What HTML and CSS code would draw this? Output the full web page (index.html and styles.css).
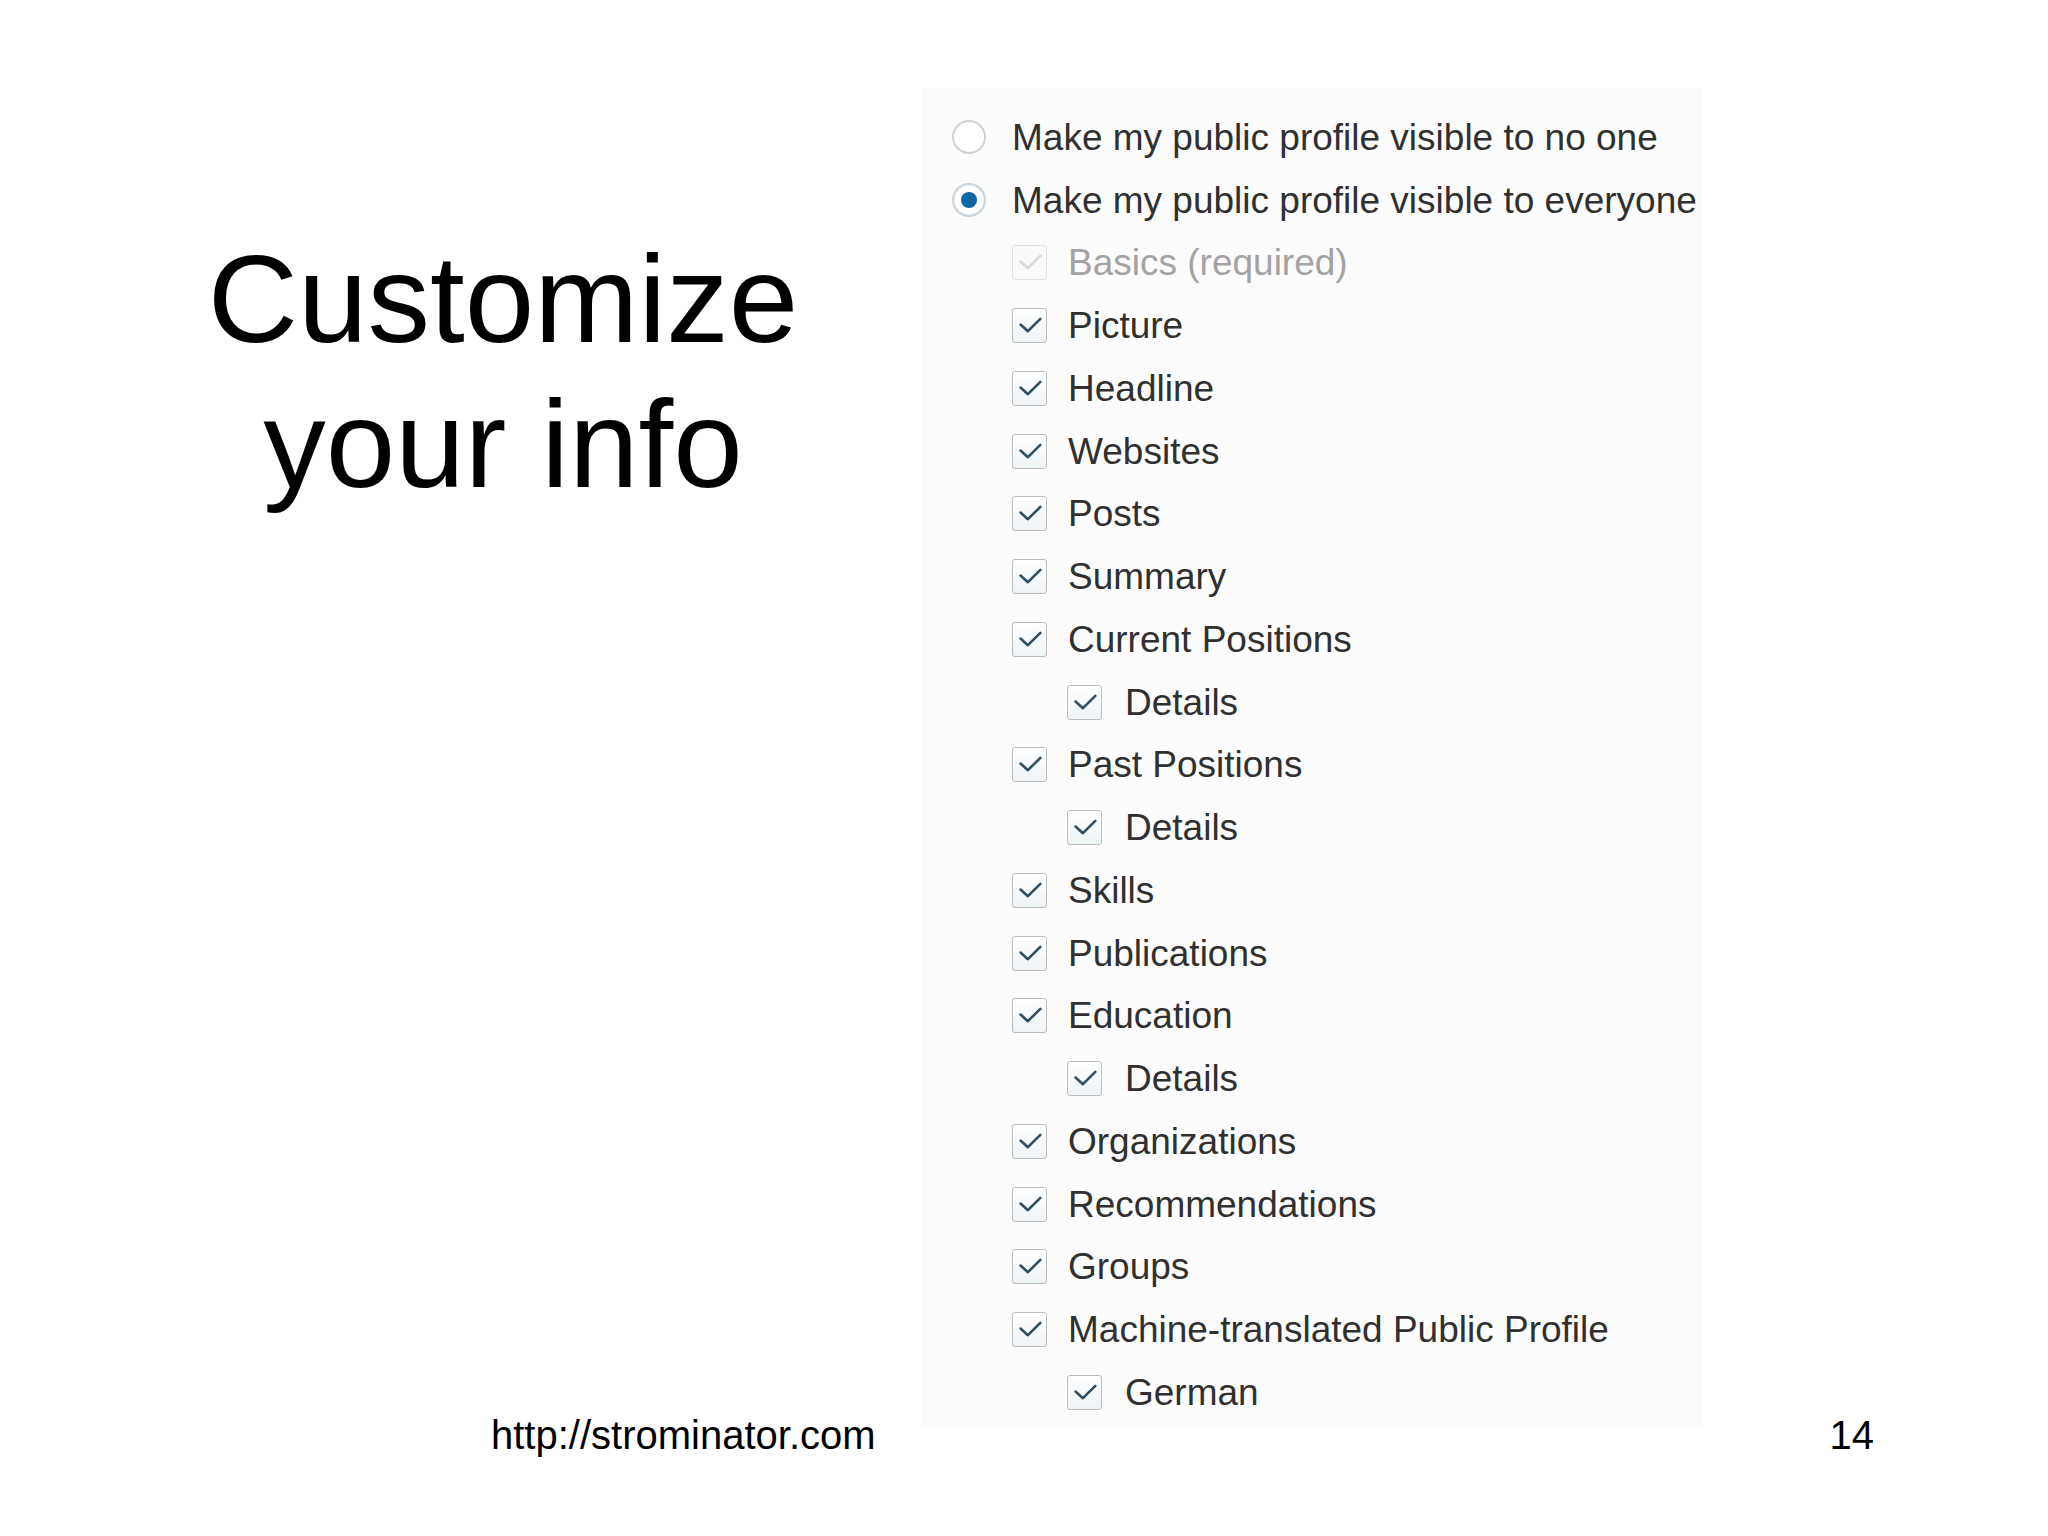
FILE: index.html
```html
<!DOCTYPE html>
<html lang="en">
<head>
<meta charset="utf-8">
<title>Customize your info</title>
<link rel="stylesheet" href="styles.css">
</head>
<body>
<main class="slide">
  <h1 class="slide-title">Customize<br>your info</h1>

  <section class="panel">
    <ul class="options">
      <li class="opt"><span class="radio"></span><span class="label">Make my public profile visible to no one</span></li>
      <li class="opt"><span class="radio radio--on"></span><span class="label">Make my public profile visible to everyone</span></li>
      <li class="opt opt--l1 opt--disabled"><span class="check"><svg viewBox="0 0 35 35"><path d="M8 16.5 L15.8 23.5 L29 10.5"/></svg></span><span class="label">Basics (required)</span></li>
      <li class="opt opt--l1"><span class="check"><svg viewBox="0 0 35 35"><path d="M8 16.5 L15.8 23.5 L29 10.5"/></svg></span><span class="label">Picture</span></li>
      <li class="opt opt--l1"><span class="check"><svg viewBox="0 0 35 35"><path d="M8 16.5 L15.8 23.5 L29 10.5"/></svg></span><span class="label">Headline</span></li>
      <li class="opt opt--l1"><span class="check"><svg viewBox="0 0 35 35"><path d="M8 16.5 L15.8 23.5 L29 10.5"/></svg></span><span class="label">Websites</span></li>
      <li class="opt opt--l1"><span class="check"><svg viewBox="0 0 35 35"><path d="M8 16.5 L15.8 23.5 L29 10.5"/></svg></span><span class="label">Posts</span></li>
      <li class="opt opt--l1"><span class="check"><svg viewBox="0 0 35 35"><path d="M8 16.5 L15.8 23.5 L29 10.5"/></svg></span><span class="label">Summary</span></li>
      <li class="opt opt--l1"><span class="check"><svg viewBox="0 0 35 35"><path d="M8 16.5 L15.8 23.5 L29 10.5"/></svg></span><span class="label">Current Positions</span></li>
      <li class="opt opt--l2"><span class="check"><svg viewBox="0 0 35 35"><path d="M8 16.5 L15.8 23.5 L29 10.5"/></svg></span><span class="label">Details</span></li>
      <li class="opt opt--l1"><span class="check"><svg viewBox="0 0 35 35"><path d="M8 16.5 L15.8 23.5 L29 10.5"/></svg></span><span class="label">Past Positions</span></li>
      <li class="opt opt--l2"><span class="check"><svg viewBox="0 0 35 35"><path d="M8 16.5 L15.8 23.5 L29 10.5"/></svg></span><span class="label">Details</span></li>
      <li class="opt opt--l1"><span class="check"><svg viewBox="0 0 35 35"><path d="M8 16.5 L15.8 23.5 L29 10.5"/></svg></span><span class="label">Skills</span></li>
      <li class="opt opt--l1"><span class="check"><svg viewBox="0 0 35 35"><path d="M8 16.5 L15.8 23.5 L29 10.5"/></svg></span><span class="label">Publications</span></li>
      <li class="opt opt--l1"><span class="check"><svg viewBox="0 0 35 35"><path d="M8 16.5 L15.8 23.5 L29 10.5"/></svg></span><span class="label">Education</span></li>
      <li class="opt opt--l2"><span class="check"><svg viewBox="0 0 35 35"><path d="M8 16.5 L15.8 23.5 L29 10.5"/></svg></span><span class="label">Details</span></li>
      <li class="opt opt--l1"><span class="check"><svg viewBox="0 0 35 35"><path d="M8 16.5 L15.8 23.5 L29 10.5"/></svg></span><span class="label">Organizations</span></li>
      <li class="opt opt--l1"><span class="check"><svg viewBox="0 0 35 35"><path d="M8 16.5 L15.8 23.5 L29 10.5"/></svg></span><span class="label">Recommendations</span></li>
      <li class="opt opt--l1"><span class="check"><svg viewBox="0 0 35 35"><path d="M8 16.5 L15.8 23.5 L29 10.5"/></svg></span><span class="label">Groups</span></li>
      <li class="opt opt--l1"><span class="check"><svg viewBox="0 0 35 35"><path d="M8 16.5 L15.8 23.5 L29 10.5"/></svg></span><span class="label">Machine-translated Public Profile</span></li>
      <li class="opt opt--l2"><span class="check"><svg viewBox="0 0 35 35"><path d="M8 16.5 L15.8 23.5 L29 10.5"/></svg></span><span class="label">German</span></li>
    </ul>
  </section>

  <footer class="slide-url">http://strominator.com</footer>
  <div class="slide-num">14</div>
</main>
</body>
</html>
```

FILE: styles.css
```css
html, body {
  margin: 0;
  padding: 0;
  background: #ffffff;
}

body {
  font-family: "Liberation Sans", Arial, sans-serif;
  color: #000;
}

/* slide canvas: left column holds the title, right column the settings panel */
.slide {
  width: 2048px;
  height: 1536px;
  display: grid;
  grid-template-columns: 922px 1fr;
  grid-template-rows: 88px 1339px 1fr;
}

.slide-title {
  grid-column: 1;
  grid-row: 2;
  align-self: start;
  margin: 138px 0 0 0;
  padding-left: 84px;
  font-size: 125px;
  font-weight: 400;
  line-height: 145px;
  text-align: center;
  color: #000;
}

/* settings panel */
.panel {
  grid-column: 2;
  grid-row: 2;
  width: 780px;
  background: #fcfcfc;
  padding: 18px 0 0 30px;
  box-sizing: border-box;
}

.options {
  list-style: none;
  margin: 0;
  padding: 0;
}

.opt {
  height: 62.75px;
  display: flex;
  align-items: center;
  font-size: 37px;
  color: #303030;
}

.opt--l1 { padding-left: 60px; }
.opt--l2 { padding-left: 115px; }

.label {
  line-height: 1;
  white-space: nowrap;
}

/* radio buttons */
.radio {
  width: 30px;
  height: 30px;
  border: 2px solid #d2d2d2;
  border-radius: 50%;
  background: #ffffff;
  margin-right: 26px;
  flex: none;
  display: flex;
  align-items: center;
  justify-content: center;
}

.radio--on {
  border-color: #c9d4db;
  box-shadow: inset 0 0 0 1px #eef3f6;
}

.radio--on::after {
  content: "";
  width: 16px;
  height: 16px;
  border-radius: 50%;
  background: #0c68a3;
}

/* checkboxes */
.check {
  width: 33px;
  height: 33px;
  border: 1.5px solid #bcbcbc;
  border-radius: 3px;
  background: linear-gradient(#ffffff, #eef3f6);
  margin-right: 21px;
  flex: none;
  box-sizing: content-box;
}

.opt--l2 .check { margin-right: 23px; }

.check svg {
  display: block;
  width: 33px;
  height: 33px;
}

.check path {
  fill: none;
  stroke: #2f4f63;
  stroke-width: 2.8;
  stroke-linecap: round;
  stroke-linejoin: round;
}

.opt--disabled { color: #a3a3a3; }
.opt--disabled .check {
  border-color: #e1e1e1;
  background: #fafafa;
}
.opt--disabled .check path { stroke: #d4d8da; }

/* footer */
.slide-url {
  grid-column: 1;
  grid-row: 2 / 4;
  align-self: end;
  justify-self: start;
  margin: 0 0 81px 491px;
  font-size: 40px;
  line-height: 40px;
  color: #000;
}

.slide-num {
  grid-column: 2;
  grid-row: 2 / 4;
  align-self: end;
  justify-self: end;
  margin: 0 174px 81px 0;
  font-size: 40px;
  line-height: 40px;
  color: #000;
}
```
